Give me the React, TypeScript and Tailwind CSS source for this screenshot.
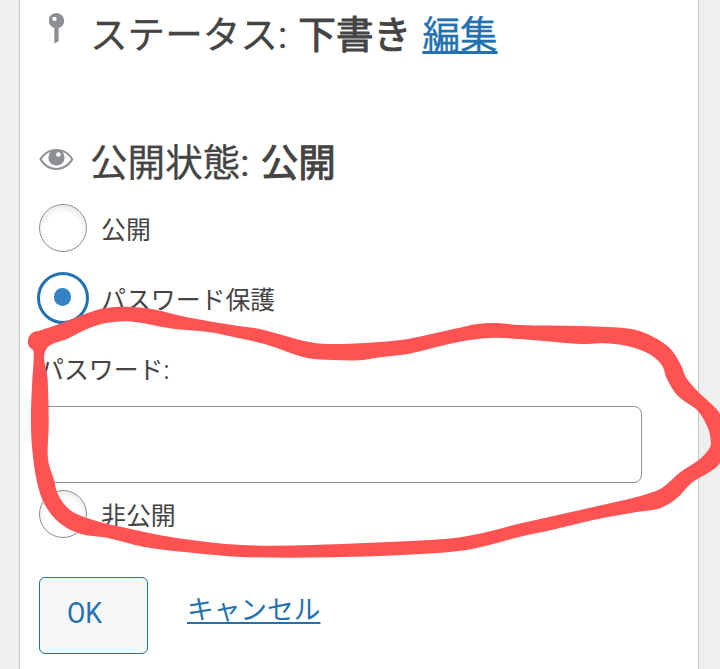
import { ReactNode } from "react";

type Point = [number, number];

const outer: Point[] = [
  [28, 341], [31, 334.5], [37, 331.5], [63, 322.7], [87, 313.3], [105, 308], [127, 306.7], [153, 309.3],
  [187, 317.3], [237, 325.7], [263, 329.7], [300, 340], [322, 343.7], [350, 343.7], [380, 342],
  [408, 339], [457, 328.3], [477, 324], [497, 323], [520, 325], [580, 326], [613, 327.3], [635, 329.7],
  [653, 336.7], [670, 348.3], [681.7, 366.7], [686, 377.5], [698, 391.7], [711.7, 404.3], [720, 414],
  [728, 438], [720, 462.7], [710, 471.7], [691.7, 482.7], [676.7, 498.3], [660, 508.3], [636.7, 512],
  [596.7, 519.3], [551.7, 530], [520, 536.7], [493, 544], [466.7, 550], [416.7, 554.3], [333, 557.3],
  [242, 557], [187, 552.3], [143, 546.7], [107, 537.7], [80, 533.7], [60, 523.3], [45, 505],
  [37.3, 483.3], [32, 446.7], [31, 413.3], [32.3, 380], [33.5, 351], [29.5, 347],
];

const inner: Point[] = [
  [45.7, 350], [68, 338.5], [90, 327.7], [110, 322.5], [133, 321.7], [170, 328.3], [210, 332.3], [237, 337.7],
  [267, 344.7], [307, 358], [333, 360], [360, 360.3], [380, 357.3], [408, 354], [457, 342.3],
  [490, 338], [520, 339], [580, 344], [603, 343.3], [627, 346], [648, 353.3], [661.7, 365], [667, 379],
  [678, 396], [698, 411], [708, 428.3], [710.7, 440], [710, 447.3], [700, 459], [680, 472.3], [663, 487.3],
  [647, 494], [620, 501], [520, 523.5], [490, 531.3], [460, 537.3], [430, 540], [312, 545], [242, 545],
  [177, 538], [117, 526], [90, 519], [70, 510], [58.3, 495], [54, 480], [48, 459.3],
  [48.7, 423], [47.7, 380],
];

// closed smooth curve running through every point
function smooth(points: Point[]) {
  const n = points.length;
  const dist = (p: Point, q: Point) => Math.hypot(p[0] - q[0], p[1] - q[1]);
  let d = `M${points[0][0]} ${points[0][1]}`;
  for (let i = 0; i < n; i++) {
    const [a, b, c, e] = [points[(i - 1 + n) % n], points[i], points[(i + 1) % n], points[(i + 2) % n]];
    const len = dist(b, c) / 3;
    const k1 = len / dist(a, c);
    const k2 = len / dist(b, e);
    d += `C${b[0] + (c[0] - a[0]) * k1} ${b[1] + (c[1] - a[1]) * k1} ${c[0] - (e[0] - b[0]) * k2} ${c[1] - (e[1] - b[1]) * k2} ${c[0]} ${c[1]}`;
  }
  return d + "Z";
}

function PinIcon() {
  return (
    <svg className="ml-2.5 mt-3 h-8 w-4 shrink-0" viewBox="0 0 16 32" fill="#8c8f94">
      <path fillRule="evenodd" d="M7.5 1a7.7 7.7 0 0 1 2.1 15.1v13.2L5.3 31.5V16.1A7.7 7.7 0 0 1 7.5 1ZM5.5 4.8a2.1 2.1 0 1 0 0 4.2a2.1 2.1 0 0 0 0-4.2Z" />
    </svg>
  );
}

function EyeIcon() {
  return (
    <svg className="h-6 w-9 shrink-0" viewBox="0 0 36 24" fill="#8c8f94">
      <path fillRule="evenodd" d="M.4 12.3C4 6 10 2 17.4 2s13.4 4 17 10.3C31 19 25 23 17.4 23S4 19 .4 12.3ZM2.8 12.3c3.2 5.3 8.5 8.7 14.6 8.7s11.4-3.4 14.6-8.7c-1.7-3-4-5.2-7-6.7H10c-3 1.5-5.5 3.7-7.2 6.7Z" />
      <circle cx="17.5" cy="10.5" r="8.1" />
      <circle cx="19.4" cy="7.5" r="2.3" fill="#fff" />
    </svg>
  );
}

function Radio({ checked = false, children }: { checked?: boolean; children: ReactNode }) {
  return (
    <label className="flex h-12 items-center text-[24.9px] leading-none">
      {checked ? (
        <span className="-mx-0.5 flex size-[52px] shrink-0 items-center justify-center rounded-full border-[3px] border-[#2271b1]">
          <span className="mr-0.5 mb-0.5 h-[18px] w-[17px] rounded-full bg-[#3582c4]" />
        </span>
      ) : (
        <span className="size-12 shrink-0 rounded-full border border-[#8c8f94] shadow-[inset_0_3px_6px_rgba(0,0,0,0.1)]" />
      )}
      <span className="ml-3.5 mt-1.5 whitespace-nowrap">{children}</span>
    </label>
  );
}

export default function App() {
  return (
    <div className="relative h-[669px] w-[720px] overflow-hidden bg-[#efefef] pl-[19px] font-[Roboto,'Noto_Sans_CJK_JP',sans-serif] text-[#444]">
      <div className="flex h-full w-[680px] flex-col border-x border-[#c3c4c7] bg-white pl-[19px]">
        <div className="flex h-[68px] text-[37.6px] leading-[70px]">
          <PinIcon />
          <p className="ml-[25px] whitespace-nowrap [-webkit-text-stroke:0.3px]">
            ステータス: <span className="ml-0.5 [-webkit-text-stroke:1px]">下書き</span>{" "}
            <a href="#" className="ml-0.5 text-[#2271b1] underline decoration-[3px] underline-offset-[3px]">編集</a>
          </p>
        </div>

        <div className="mt-[60px] flex h-[68px] text-[37.6px] leading-[70px]">
          <div className="mt-[19px]">
            <EyeIcon />
          </div>
          <p className="ml-[15px] whitespace-nowrap [-webkit-text-stroke:0.3px]">
            公開状態: <span className="ml-0.5 [-webkit-text-stroke:1px]">公開</span>
          </p>
        </div>

        <div className="mt-2">
          <Radio>公開</Radio>
        </div>
        <div className="mt-[22px]">
          <Radio checked>パスワード保護</Radio>
        </div>
        <p className="mt-[34px] h-[30px] text-[24.9px] leading-[30px]">パスワード:</p>
        <input type="password" className="mt-[20px] h-[77px] w-[603px] shrink-0 rounded-[8px] border border-[#8c8f94] bg-white" />
        <div className="mt-[7px]">
          <Radio>非公開</Radio>
        </div>

        <div className="mt-[39px] flex text-[#2271b1]">
          <button className="h-[77px] w-[109px] rounded-[6px] border border-[#2271b1] bg-[#f6f7f7] pb-1 pl-[27px] text-left text-[29px]">
            <span className="inline-block origin-left scale-x-[0.92]">OK</span>
          </button>
          <a href="#" className="ml-[39px] text-[26.7px] leading-[67px] underline decoration-2 underline-offset-[3px]">キャンセル</a>
        </div>
      </div>

      {/* Marker line around the password field */}
      <svg className="pointer-events-none absolute inset-0" width="720" height="669" viewBox="0 0 720 669">
        <path fill="#ff5353" fillRule="evenodd" d={smooth(outer) + smooth(inner)} />
        <circle cx="38" cy="341" r="10" fill="#ff5353" />
      </svg>
    </div>
  );
}
